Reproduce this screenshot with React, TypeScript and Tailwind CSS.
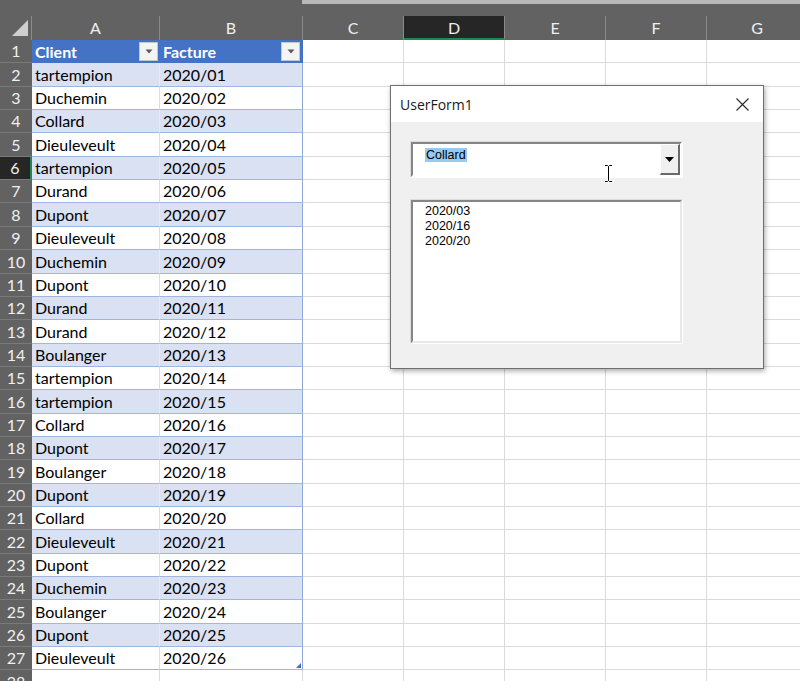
import React from "react";

const data: [string, string][] = [
  ["tartempion", "2020/01"],
  ["Duchemin", "2020/02"],
  ["Collard", "2020/03"],
  ["Dieuleveult", "2020/04"],
  ["tartempion", "2020/05"],
  ["Durand", "2020/06"],
  ["Dupont", "2020/07"],
  ["Dieuleveult", "2020/08"],
  ["Duchemin", "2020/09"],
  ["Dupont", "2020/10"],
  ["Durand", "2020/11"],
  ["Durand", "2020/12"],
  ["Boulanger", "2020/13"],
  ["tartempion", "2020/14"],
  ["tartempion", "2020/15"],
  ["Collard", "2020/16"],
  ["Dupont", "2020/17"],
  ["Boulanger", "2020/18"],
  ["Dupont", "2020/19"],
  ["Collard", "2020/20"],
  ["Dieuleveult", "2020/21"],
  ["Dupont", "2020/22"],
  ["Duchemin", "2020/23"],
  ["Boulanger", "2020/24"],
  ["Dupont", "2020/25"],
  ["Dieuleveult", "2020/26"],
];

const tops: number[] = [];
for (let i = 0; i <= 28; i++) tops.push(Math.round(40 + i * 23.35));
const heightClass = (i: number) =>
  tops[i + 1] - tops[i] >= 24 ? "h-[24px]" : "h-[23px]";

const FilterBtn = () => (
  <div className="mr-[2px] flex h-[19px] w-[19px] items-center justify-center border border-[#c6c6c6] bg-[#f4f4f4]">
    <svg width="8" height="5" viewBox="0 0 8 5">
      <path d="M0.5 0.5 H7.5 L4 4.5 Z" fill="#5a5a5a" />
    </svg>
  </div>
);

const cols = ["C", "D", "E", "F", "G"];

export default function App() {
  return (
    <div className="relative h-[681px] w-[800px] overflow-hidden bg-white font-['Lato',sans-serif]">
      {/* top strip */}
      <div className="flex h-[16px] bg-[#626262]">
        <div className="w-[302px] shrink-0" />
        <div className="h-[4px] flex-1 bg-[#b8b8b8]" />
      </div>
      {/* column header */}
      <div className="flex h-[24px] bg-[#626262] text-[16px] text-[#f0f0f0]">
        <div className="relative w-[32px] shrink-0 border-r border-[#8a8a8a]">
          <svg className="absolute bottom-[3px] right-[2px]" width="17" height="17" viewBox="0 0 17 17">
            <path d="M16 0 V16 H0 Z" fill="#cfcfcf" />
          </svg>
        </div>
        <div className="flex w-[128px] shrink-0 items-center justify-center border-r border-[#8a8a8a]">A</div>
        <div className="flex w-[143px] shrink-0 items-center justify-center border-r border-[#8a8a8a]">B</div>
        {cols.map((c) => (
          <div
            key={c}
            className={
              c === "D"
                ? "flex w-[101px] shrink-0 items-center justify-center border-b-2 border-r border-b-[#1e8a4c] border-r-[#8a8a8a] bg-[#262626] pt-[2px]"
                : "flex w-[101px] shrink-0 items-center justify-center border-r border-[#8a8a8a]"
            }
          >
            {c}
          </div>
        ))}
      </div>
      {/* rows */}
      {Array.from({ length: 28 }).map((_, i) => {
        const r = i + 1;
        const isHeader = r === 1;
        const d = r >= 2 && r <= 27 ? data[r - 2] : null;
        const blue = r >= 2 && r <= 27 && r % 2 === 0;
        const selected = r === 6;
        return (
          <div key={r} className={`flex ${heightClass(i)}`}>
            <div
              className={
                selected
                  ? "flex w-[32px] shrink-0 items-center justify-center border-b border-r-2 border-b-[#7a7a7a] border-r-[#1e8a4c] bg-[#262626] text-[16px] text-[#f0f0f0]"
                  : "flex w-[32px] shrink-0 items-center justify-center border-b border-[#7a7a7a] bg-[#626262] text-[16px] text-[#f0f0f0]"
              }
            >
              {r}
            </div>
            {isHeader ? (
              <>
                <div className="flex w-[128px] shrink-0 items-center justify-between bg-[#4472c4] pl-[3px] text-[16px] font-bold text-white">
                  <span>Client</span>
                  <FilterBtn />
                </div>
                <div className="flex w-[143px] shrink-0 items-center justify-between border-r border-[#4472c4] bg-[#4472c4] pl-[3px] text-[16px] font-bold text-white">
                  <span>Facture</span>
                  <FilterBtn />
                </div>
              </>
            ) : d ? (
              <>
                <div
                  className={
                    blue
                      ? "flex w-[128px] shrink-0 items-center border-b border-r border-b-[#9fb6e0] border-r-[#e6ebf6] bg-[#d9e1f2] pl-[3px] text-[16px] text-black"
                      : "flex w-[128px] shrink-0 items-center border-b border-r border-b-[#9fb6e0] border-r-[#dcdcdc] bg-white pl-[3px] text-[16px] text-black"
                  }
                >
                  {d[0]}
                </div>
                <div
                  className={
                    blue
                      ? "relative flex w-[143px] shrink-0 items-center border-b border-r border-b-[#9fb6e0] border-r-[#8ea9db] bg-[#d9e1f2] pl-[3px] text-[16px] text-black"
                      : "relative flex w-[143px] shrink-0 items-center border-b border-r border-b-[#9fb6e0] border-r-[#8ea9db] bg-white pl-[3px] text-[16px] text-black"
                  }
                >
                  {d[1]}
                  {r === 27 && (
                    <svg className="absolute bottom-[1px] right-[1px]" width="5" height="5" viewBox="0 0 5 5">
                      <path d="M5 0 V5 H0 Z" fill="#3f6fc6" />
                    </svg>
                  )}
                </div>
              </>
            ) : (
              <>
                <div className="w-[128px] shrink-0 border-b border-r border-[#dadada]" />
                <div className="w-[143px] shrink-0 border-b border-r border-[#dadada]" />
              </>
            )}
            {cols.map((c) => (
              <div key={c} className="w-[101px] shrink-0 border-b border-r border-[#dadada]" />
            ))}
          </div>
        );
      })}

      {/* UserForm */}
      <div className="absolute left-[390px] top-[85px] flex h-[284px] w-[374px] flex-col border border-[#6f6f6f] shadow-[1px_2px_5px_rgba(0,0,0,0.35)] font-['Open_Sans',sans-serif]">
        <div className="flex h-[36px] shrink-0 items-center justify-between bg-white pl-[9px] pr-[14px]">
          <span className="text-[14px] text-[#1a1a1a]">UserForm1</span>
          <svg width="13" height="13" viewBox="0 0 13 13">
            <path d="M0.5 0.5 L12.5 12.5 M12.5 0.5 L0.5 12.5" stroke="#2a2a2a" strokeWidth="1.1" />
          </svg>
        </div>
        <div className="flex flex-1 flex-col gap-[21px] bg-[#f0f0f0] pl-[19px] pt-[19px] font-['Liberation_Sans',sans-serif] text-[12.5px] text-black">
          {/* ComboBox */}
          <div className="h-[37px] w-[273px] border border-b-white border-l-[#dcdcdc] border-r-white border-t-[#dcdcdc]">
            <div className="flex h-full w-full border-2 border-b-white border-l-[#858585] border-r-white border-t-[#858585] bg-white">
              <div className="flex-1 pl-[12px] pt-[2px]">
                <span className="bg-[#99c9ef] px-[1px] leading-[16px]">Collard</span>
              </div>
              <div className="flex h-full w-[20px] items-center justify-center border-b-2 border-l border-r-2 border-t border-b-[#6a6a6a] border-l-white border-r-[#6a6a6a] border-t-white bg-[#f0f0f0]">
                <svg width="9" height="5" viewBox="0 0 9 5">
                  <path d="M0 0 H9 L4.5 5 Z" fill="#000" />
                </svg>
              </div>
            </div>
          </div>
          {/* ListBox */}
          <div className="h-[145px] w-[273px] border border-b-white border-l-[#dcdcdc] border-r-white border-t-[#dcdcdc]">
            <div className="flex h-full w-full flex-col border-2 border-b-[#e8e8e8] border-l-[#858585] border-r-[#e8e8e8] border-t-[#858585] bg-white pl-[12px] pt-[2px] leading-[15px]">
              <span>2020/03</span>
              <span>2020/16</span>
              <span>2020/20</span>
            </div>
          </div>
        </div>
      </div>

      {/* I-beam cursor */}
      <svg className="absolute left-[603px] top-[164px]" width="11" height="19" viewBox="0 0 11 19">
        <path
          d="M2 1.5 H4.5 L5.5 2.5 L6.5 1.5 H9 M5.5 2.5 V16.5 M2 17.5 H4.5 L5.5 16.5 L6.5 17.5 H9"
          stroke="#ffffff"
          strokeWidth="3"
          fill="none"
        />
        <path
          d="M2 1.5 H4.5 L5.5 2.5 L6.5 1.5 H9 M5.5 2.5 V16.5 M2 17.5 H4.5 L5.5 16.5 L6.5 17.5 H9"
          stroke="#000000"
          strokeWidth="1"
          fill="none"
        />
      </svg>
    </div>
  );
}
